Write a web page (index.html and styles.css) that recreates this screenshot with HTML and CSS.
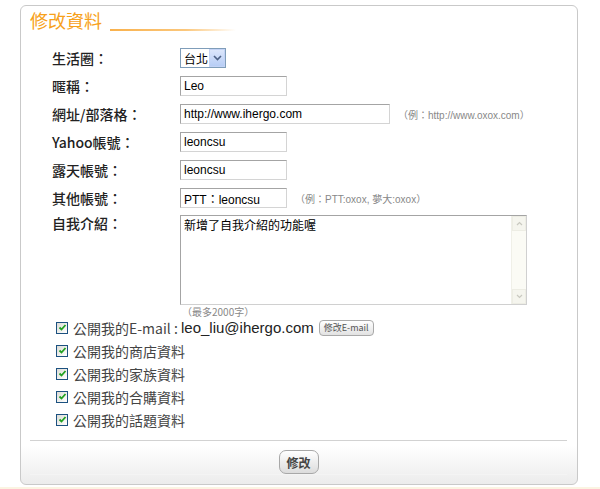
FILE: index.html
```html
<!DOCTYPE html>
<html lang="zh-Hant">
<head>
    <meta charset="UTF-8">
    <title>修改資料</title>
    <link rel="stylesheet" href="styles.css">
</head>
<body>
    <div class="panel">
        <div class="panel-title">
            <h1>修改資料</h1>
            <span class="title-line"></span>
        </div>

        <form class="profile-form">
            <div class="form-grid">
                <label>生活圈：</label>
                <div class="field">
                    <div class="fake-select">
                        <span>台北</span>
                        <span class="select-arrow">
                            <svg width="9" height="6" viewBox="0 0 9 6"><path d="M1 1 L4.5 4.5 L8 1" fill="none" stroke="#4d6185" stroke-width="1.6"/></svg>
                        </span>
                    </div>
                </div>

                <label>暱稱：</label>
                <div class="field"><input type="text" class="short" value="Leo"></div>

                <label>網址/部落格：</label>
                <div class="field">
                    <input type="text" class="long" value="http://www.ihergo.com">
                    <span class="hint">（例：http://www.oxox.com）</span>
                </div>

                <label>Yahoo帳號：</label>
                <div class="field"><input type="text" class="short" value="leoncsu"></div>

                <label>露天帳號：</label>
                <div class="field"><input type="text" class="short" value="leoncsu"></div>

                <label>其他帳號：</label>
                <div class="field">
                    <input type="text" class="short" value="PTT：leoncsu">
                    <span class="hint">（例：PTT:oxox, 夢大:oxox）</span>
                </div>

                <label class="top">自我介紹：</label>
                <div class="field-block">
                    <div class="textbox">
                        <div class="textbox-text">新增了自我介紹的功能喔</div>
                        <div class="scrollbar">
                            <span class="scroll-btn">
                                <svg width="7" height="5" viewBox="0 0 7 5"><path d="M1 4 L3.5 1.5 L6 4" fill="none" stroke="#c9c9c0" stroke-width="1.2"/></svg>
                            </span>
                            <span class="scroll-track"></span>
                            <span class="scroll-btn">
                                <svg width="7" height="5" viewBox="0 0 7 5"><path d="M1 1 L3.5 3.5 L6 1" fill="none" stroke="#c9c9c0" stroke-width="1.2"/></svg>
                            </span>
                        </div>
                    </div>
                    <div class="count-hint">（最多2000字）</div>
                </div>
            </div>

            <ul class="checks">
                <li>
                    <span class="checkbox"><svg width="9" height="9" viewBox="0 0 9 9"><path d="M1.5 4.5 L3.5 6.5 L7.5 2" fill="none" stroke="#21a121" stroke-width="1.8"/></svg></span>
                    <span>公開我的E-mail :&nbsp;</span>
                    <span class="email">leo_liu@ihergo.com</span>
                    <button type="button" class="small-btn">修改E-mail</button>
                </li>
                <li>
                    <span class="checkbox"><svg width="9" height="9" viewBox="0 0 9 9"><path d="M1.5 4.5 L3.5 6.5 L7.5 2" fill="none" stroke="#21a121" stroke-width="1.8"/></svg></span>
                    <span>公開我的商店資料</span>
                </li>
                <li>
                    <span class="checkbox"><svg width="9" height="9" viewBox="0 0 9 9"><path d="M1.5 4.5 L3.5 6.5 L7.5 2" fill="none" stroke="#21a121" stroke-width="1.8"/></svg></span>
                    <span>公開我的家族資料</span>
                </li>
                <li>
                    <span class="checkbox"><svg width="9" height="9" viewBox="0 0 9 9"><path d="M1.5 4.5 L3.5 6.5 L7.5 2" fill="none" stroke="#21a121" stroke-width="1.8"/></svg></span>
                    <span>公開我的合購資料</span>
                </li>
                <li>
                    <span class="checkbox"><svg width="9" height="9" viewBox="0 0 9 9"><path d="M1.5 4.5 L3.5 6.5 L7.5 2" fill="none" stroke="#21a121" stroke-width="1.8"/></svg></span>
                    <span>公開我的話題資料</span>
                </li>
            </ul>

            <div class="actions">
                <button type="submit" class="submit-btn">修改</button>
            </div>
        </form>
    </div>
    <div class="footer-line"></div>
</body>
</html>
```

FILE: styles.css
```css
* {
    margin: 0;
    padding: 0;
    box-sizing: border-box;
}

body {
    background: #fff;
    font-family: "Liberation Sans", "Noto Sans CJK TC", sans-serif;
    color: #333;
    width: 600px;
    height: 489px;
    overflow: hidden;
}

.panel {
    margin: 5px 0 0 20px;
    width: 558px;
    height: 480px;
    border: 1px solid #c9c9c9;
    border-radius: 6px;
    background: linear-gradient(to bottom, #fff 0%, #fff 92%, #ececec 100%);
}

.panel-title {
    display: flex;
    align-items: flex-end;
    padding: 3px 0 0 9px;
    height: 25px;
}

.panel-title h1 {
    font-family: "Noto Sans CJK TC", sans-serif;
    font-size: 18px;
    font-weight: normal;
    color: #f7a11a;
    line-height: 22px;
}

.title-line {
    display: block;
    width: 126px;
    height: 2px;
    margin: 0 0 0 8px;
    background: linear-gradient(to right, #f9b14c 0%, #fbc77c 60%, rgba(252, 210, 150, 0) 100%);
}

.profile-form {
    padding: 13px 0 0 31px;
}

.form-grid {
    display: grid;
    grid-template-columns: 128px 1fr;
    grid-auto-rows: 28px;
}

.form-grid label {
    font-family: "Noto Sans CJK TC", sans-serif;
    font-size: 14px;
    font-weight: 500;
    color: #222;
    display: flex;
    align-items: center;
}

.form-grid label.top {
    align-items: flex-start;
    padding-top: 1px;
}

.field {
    display: flex;
    align-items: center;
}

input[type="text"] {
    height: 20px;
    border: 1px solid #a4a4a4;
    border-right-color: #d4d4d4;
    border-bottom-color: #d4d4d4;
    padding: 0 3px;
    font-family: "Liberation Sans", "Noto Sans CJK TC", sans-serif;
    font-size: 12px;
    color: #000;
    background: #fff;
}

input.short {
    width: 107px;
}

input.long {
    width: 210px;
}

.hint {
    margin-left: 8px;
    font-family: "Liberation Sans", "Noto Sans CJK TC", sans-serif;
    font-size: 10px;
    color: #888;
}

.fake-select {
    display: flex;
    align-items: center;
    width: 46px;
    height: 20px;
    border: 1px solid #7f9db9;
    background: #fff;
    font-family: "Noto Sans CJK TC", sans-serif;
    font-size: 12px;
    color: #000;
    padding-left: 3px;
    justify-content: space-between;
}

.select-arrow {
    width: 16px;
    height: 18px;
    display: flex;
    align-items: center;
    justify-content: center;
    background: linear-gradient(to bottom, #dce6fb, #b7cdf5);
    border: 1px solid #c3d3f6;
}

.field-block {
    grid-row: span 4;
    padding-top: 3px;
}

.textbox {
    display: flex;
    width: 347px;
    height: 90px;
    border: 1px solid #a4a4a4;
    border-right-color: #d0d0d0;
    border-bottom-color: #d0d0d0;
    background: #fff;
}

.textbox-text {
    flex: 1;
    padding: 1px 3px;
    font-family: "Noto Sans CJK TC", sans-serif;
    font-size: 12px;
    line-height: 15px;
    color: #000;
}

.scrollbar {
    width: 15px;
    display: flex;
    flex-direction: column;
    background: #fbfbf5;
    border-left: 1px solid #f0f0e8;
}

.scroll-btn {
    height: 15px;
    display: flex;
    align-items: center;
    justify-content: center;
    background: #f5f5ee;
    border: 1px solid #ededE4;
}

.scroll-track {
    flex: 1;
}

.count-hint {
    font-family: "Noto Sans CJK TC", sans-serif;
    font-size: 10px;
    color: #888;
    line-height: 14px;
    padding-left: 2px;
}

.checks {
    list-style: none;
    margin-top: -8px;
    padding-left: 4px;
}

.checks li {
    display: flex;
    align-items: center;
    height: 23px;
    font-family: "Noto Sans CJK TC", sans-serif;
    font-size: 14px;
    color: #444;
}

.checkbox {
    width: 12px;
    height: 12px;
    border: 1px solid #1c5180;
    background: linear-gradient(135deg, #dcdcd6, #fff);
    display: flex;
    align-items: center;
    justify-content: center;
    margin-right: 5px;
}

.email {
    font-family: "Liberation Sans", sans-serif;
    font-size: 15px;
    color: #222;
}

.small-btn {
    margin-left: 5px;
    height: 16px;
    padding: 0 4px;
    border: 1px solid #a9a9a9;
    border-radius: 4px;
    background: linear-gradient(to bottom, #fff, #e2e2e2);
    font-family: "Noto Sans CJK TC", sans-serif;
    font-size: 9px;
    color: #555;
}

.actions {
    margin: 9px 10px 0 -22px;
    border-top: 1px solid #d2d2d2;
    box-shadow: 0 1px 0 #f4f4f4;
    display: flex;
    justify-content: center;
    padding-top: 9px;
}

.submit-btn {
    width: 40px;
    height: 24px;
    border: 1px solid #a8a8a8;
    border-radius: 7px;
    background: linear-gradient(to bottom, #fff, #dcdcdc);
    font-family: "Noto Sans CJK TC", sans-serif;
    font-size: 12px;
    font-weight: bold;
    color: #444;
}

.footer-line {
    margin-top: 2px;
    height: 2px;
    background: #fbf4e2;
}
```
